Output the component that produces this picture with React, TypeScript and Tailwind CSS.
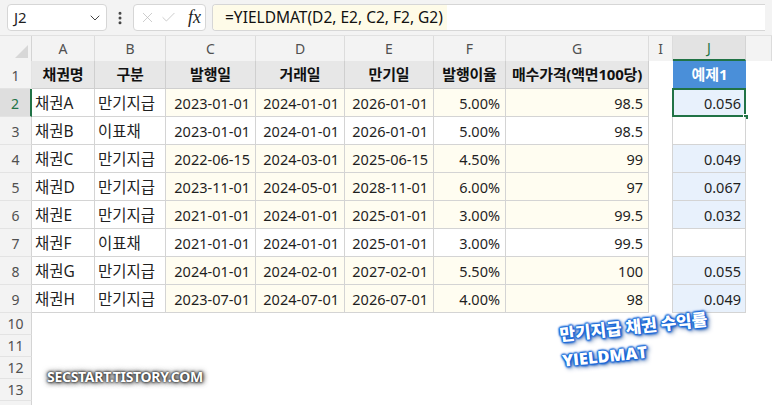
import React from 'react';
import { ChevronDown, EllipsisVertical, X, Check } from 'lucide-react';

type Row = {
  name: string;
  kind: string;
  issue: string;
  settle: string;
  maturity: string;
  rate: string;
  price: string;
  result: string;
};

const rows: Row[] = [
  { name: '채권A', kind: '만기지급', issue: '2023-01-01', settle: '2024-01-01', maturity: '2026-01-01', rate: '5.00%', price: '98.5', result: '0.056' },
  { name: '채권B', kind: '이표채', issue: '2023-01-01', settle: '2024-01-01', maturity: '2026-01-01', rate: '5.00%', price: '98.5', result: '' },
  { name: '채권C', kind: '만기지급', issue: '2022-06-15', settle: '2024-03-01', maturity: '2025-06-15', rate: '4.50%', price: '99', result: '0.049' },
  { name: '채권D', kind: '만기지급', issue: '2023-11-01', settle: '2024-05-01', maturity: '2028-11-01', rate: '6.00%', price: '97', result: '0.067' },
  { name: '채권E', kind: '만기지급', issue: '2021-01-01', settle: '2024-01-01', maturity: '2025-01-01', rate: '3.00%', price: '99.5', result: '0.032' },
  { name: '채권F', kind: '이표채', issue: '2021-01-01', settle: '2024-01-01', maturity: '2025-01-01', rate: '3.00%', price: '99.5', result: '' },
  { name: '채권G', kind: '만기지급', issue: '2024-01-01', settle: '2024-02-01', maturity: '2027-02-01', rate: '5.50%', price: '100', result: '0.055' },
  { name: '채권H', kind: '만기지급', issue: '2023-07-01', settle: '2024-07-01', maturity: '2026-07-01', rate: '4.00%', price: '98', result: '0.049' },
];

const headers = ['채권명', '구분', '발행일', '거래일', '만기일', '발행이율', '매수가격(액면100당)'];
const letters = ['A', 'B', 'C', 'D', 'E', 'F', 'G', 'I', 'J', ''];

const cols = 'grid grid-cols-[32px_63px_71px_90px_89px_89px_72px_143px_24px_73px_1fr]';

const App: React.FC = () => {
  return (
    <div className="relative w-[772px] h-[405px] overflow-hidden bg-white font-['Noto_Sans','Noto_Sans_CJK_KR',sans-serif] text-[#1f1f1f]">
      {/* formula bar */}
      <div className="h-[36px] bg-[#f3f3f3] flex items-center gap-[4px] px-[7px] border-b border-[#e1e1e1]">
        <div className="w-[100px] h-[27px] bg-white border border-[#d6d6d6] rounded-[4px] flex items-center justify-between pl-[6px] pr-[3px]">
          <span className="text-[15px]">J2</span>
          <ChevronDown size={16} strokeWidth={1.5} className="text-[#444]" />
        </div>
        <EllipsisVertical size={16} strokeWidth={2.5} className="text-[#444] mx-[1px]" />
        <div className="w-[73px] h-[27px] bg-white border border-[#d6d6d6] rounded-[4px] flex items-center pl-[5px] gap-[4px]">
          <X size={17} strokeWidth={1} className="text-[#b8b8b8]" />
          <Check size={17} strokeWidth={1} className="text-[#b8b8b8]" />
          <span className="ml-[7px] font-['Liberation_Serif',serif] italic text-[18px] text-[#222]">fx</span>
        </div>
        <div className="flex-1 h-[27px] ml-[2px] bg-white border border-[#d6d6d6] rounded-l-[4px] border-r-0 flex items-center overflow-hidden">
          <span className="h-full flex items-center bg-[#fefbe8] pl-[12px] pr-[4px] text-[15.5px] text-[#111]">
            =YIELDMAT(D2, E2, C2, F2, G2)
          </span>
        </div>
      </div>

      {/* column headers */}
      <div className={`${cols} h-[25px] bg-[#f3f3f3] text-[14px] text-[#505050]`}>
        <div className="relative border-r border-[#d4d4d4]">
          <div className="absolute right-[3px] bottom-[3px] w-0 h-0 border-l-[13px] border-l-transparent border-b-[13px] border-b-[#d7d7d7]" />
        </div>
        {letters.map((l, i) => (
          <div
            key={i}
            className={
              l === 'J'
                ? 'flex items-center justify-center bg-[#e3e3e3] border-r border-[#d4d4d4] border-b-2 border-b-[#217346] text-[#217346]'
                : 'flex items-center justify-center border-r border-[#dcdcdc]'
            }
          >
            {l}
          </div>
        ))}
      </div>

      {/* row 1 */}
      <div className={`${cols} h-[28px] text-[15px]`}>
        <div className="bg-[#f3f3f3] border-r border-[#d4d4d4] border-b border-[#e3e3e3] flex items-end justify-center pb-[2px] text-[14px] text-[#505050]">1</div>
        {headers.map((h) => (
          <div key={h} className="bg-[#e7e7e7] border-r border-b border-[#cfcfcf] flex items-center justify-center font-bold text-[#111] tracking-[-0.2px]">
            {h}
          </div>
        ))}
        <div />
        <div className="bg-[#4a8fd9] border-b border-[#cfcfcf] flex items-center justify-center font-bold text-white">예제1</div>
        <div />
      </div>

      {/* data rows */}
      {rows.map((r, i) => {
        const fixed = r.kind === '만기지급';
        const y = fixed ? 'bg-[#fffdf1]' : 'bg-white';
        const num = `${y} border-r border-b border-[#d4d4d4] flex items-center justify-end pr-[5px] pt-[2px]`;
        const selected = i === 0;
        return (
          <div key={r.name} className={`${cols} h-[28px] text-[14.5px]`}>
            <div
              className={
                selected
                  ? 'bg-[#dedede] border-r-2 border-[#217346] border-b border-b-[#e3e3e3] flex items-end justify-center pb-[2px] text-[14px] text-[#217346]'
                  : 'bg-[#f3f3f3] border-r border-[#d4d4d4] border-b border-b-[#e3e3e3] flex items-end justify-center pb-[2px] text-[14px] text-[#505050]'
              }
            >
              {i + 2}
            </div>
            <div className="border-r border-b border-[#d4d4d4] flex items-center pl-[3px] pt-[2px] text-[15.5px]">{r.name}</div>
            <div className="border-r border-b border-[#d4d4d4] flex items-center pl-[3px] pt-[2px] text-[15.5px]">{r.kind}</div>
            <div className={num}>{r.issue}</div>
            <div className={num}>{r.settle}</div>
            <div className={num}>{r.maturity}</div>
            <div className={num}>{r.rate}</div>
            <div className={num}>{r.price}</div>
            <div className="border-r border-[#d4d4d4]" />
            <div
              className={`relative ${fixed ? 'bg-[#e8f1fc]' : 'bg-white'} border-r border-b border-[#d4d4d4] flex items-center justify-end pr-[4px] pt-[2px]`}
            >
              {r.result}
              {selected && (
                <>
                  <div className="absolute -left-[1px] -top-[1px] -right-[1px] -bottom-[1px] border-2 border-[#217346]" />
                  <div className="absolute -right-[4px] -bottom-[4px] w-[6px] h-[6px] bg-[#217346] border border-white" />
                </>
              )}
            </div>
            <div />
          </div>
        );
      })}

      {/* empty rows */}
      {[10, 11, 12, 13].map((n) => (
        <div key={n} className={`${cols} h-[22px]`}>
          <div className="bg-[#f3f3f3] border-r border-[#d4d4d4] border-b border-b-[#e3e3e3] flex items-center justify-center text-[14px] text-[#505050]">
            {n}
          </div>
        </div>
      ))}
      <div className={`${cols} h-[10px]`}>
        <div className="bg-[#f3f3f3] border-r border-[#d4d4d4]" />
      </div>

      {/* watermark */}
      <div className="absolute left-[47px] top-[366px] text-[14px] font-bold tracking-[-0.3px] text-white font-['Noto_Sans',sans-serif] [text-shadow:0_0_2px_#222,0_0_3px_#333,1px_1px_5px_#444,0_0_6px_#666]">
        SECSTART.TISTORY.COM
      </div>

      {/* blue caption */}
      <div className="absolute left-[558px] top-[320px] -rotate-[6deg] origin-top-left font-bold text-white leading-[27px] [text-shadow:0_0_1px_#1565d8,0_0_2px_#1565d8,1px_0_2px_#1565d8,-1px_0_2px_#1565d8,0_1px_2px_#1565d8,0_-1px_2px_#1565d8,1px_1px_3px_#1565d8,2px_2px_5px_#0b3a80]">
        <div className="text-[17px] font-['Noto_Sans_CJK_KR',sans-serif] font-black">만기지급 채권 수익률</div>
        <div className="text-[16.5px] font-['Open_Sans',sans-serif] font-extrabold">YIELDMAT</div>
      </div>
    </div>
  );
};

export default App;
